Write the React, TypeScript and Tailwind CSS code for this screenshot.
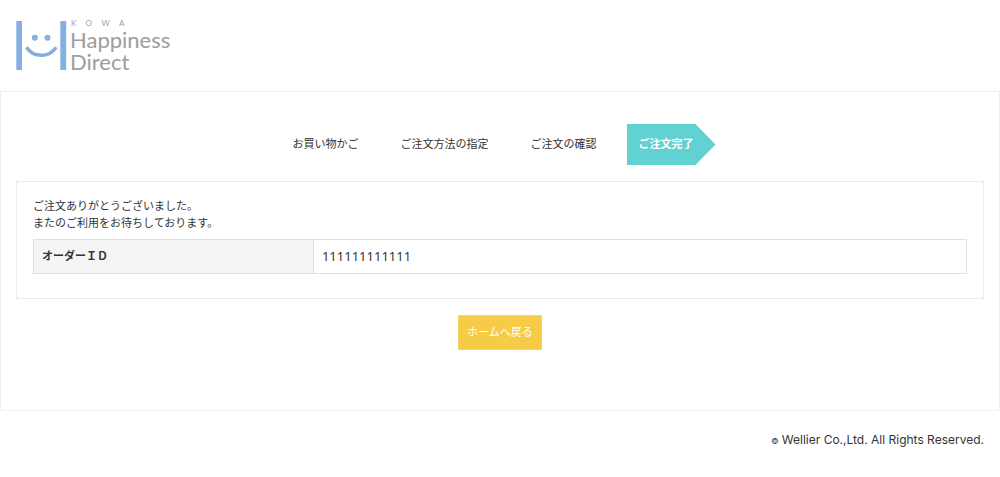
const steps = ["お買い物かご", "ご注文方法の指定", "ご注文の確認", "ご注文完了"];

function Logo() {
  return (
    <a href="/" aria-label="KOWA Happiness Direct" className="block w-fit">
      <svg width="160" height="56" viewBox="0 0 160 56" className="block overflow-visible">
        <g fill="#85afe0">
          <rect x="0.3" y="3" width="5.7" height="49" />
          <rect x="44.3" y="3" width="5.9" height="49" />
          <circle cx="18.8" cy="19.8" r="3" />
          <circle cx="31.5" cy="19.8" r="3" />
        </g>
        <path
          d="M10.4 29.2 C17.5 40 33 40 40.2 29.2"
          fill="none"
          stroke="#85afe0"
          strokeWidth="3.4"
        />
        <g fill="#9f9f9f" fontFamily="Lato, sans-serif">
          <text x="55 69.5 85.5 103" y="8" fontSize="8">
            KOWA
          </text>
          <text x="54" y="30" fontSize="22" stroke="#9f9f9f" strokeWidth="0.1">
            Happiness
          </text>
          <text x="54" y="52" fontSize="22" stroke="#9f9f9f" strokeWidth="0.1">
            Direct
          </text>
        </g>
      </svg>
    </a>
  );
}

function StepList({ current }: { current: number }) {
  return (
    <ol className="flex justify-center gap-[10px] pr-1">
      {steps.map((label, i) => (
        <li
          key={label}
          aria-current={i === current ? "step" : undefined}
          className={
            i === current
              ? "bg-[#62d1d2] py-3 pl-3 pr-[22px] font-bold text-white [clip-path:polygon(0_0,calc(100%-20px)_0,100%_50%,calc(100%-20px)_100%,0_100%)]"
              : "py-3 pl-3 pr-5"
          }
        >
          {label}
        </li>
      ))}
    </ol>
  );
}

export default function App() {
  return (
    <div className="bg-white font-['Liberation_Sans','Noto_Sans_CJK_JP',sans-serif] text-[11px] leading-[17px] text-[#333]">
      <header className="px-4 pt-[18px] pb-[17px]">
        <Logo />
      </header>

      <main className="border border-[#f0f0f0] px-[15px] pt-8 pb-[60px]">
        <StepList current={3} />

        <section className="mt-4 border border-[#ebebeb] px-4 pt-4 pb-6">
          <p>
            ご注文ありがとうございました。
            <br />
            またのご利用をお待ちしております。
          </p>
          <table className="mt-[7px] w-full border-collapse">
            <tbody>
              <tr>
                <th
                  scope="row"
                  className="w-[30%] border border-[#dfdfdf] bg-[#f5f5f5] p-2 text-left font-bold"
                >
                  オーダーＩＤ
                </th>
                <td className="border border-[#dfdfdf] p-2 font-['Noto_Sans',sans-serif] text-[13px]">
                  111111111111
                </td>
              </tr>
            </tbody>
          </table>
        </section>

        <div className="mt-4 text-center">
          <a
            href="/"
            className="inline-block border border-[#f8d769] bg-[#f6cb45] p-2 text-white"
          >
            ホームへ戻る
          </a>
        </div>
      </main>

      <footer className="px-4 pt-5 pb-7 text-right">
        <small className="font-['Inter',sans-serif] text-[12px]">
          <span className="text-[8px]">©</span> Wellier Co.,Ltd. All Rights Reserved.
        </small>
      </footer>
    </div>
  );
}
